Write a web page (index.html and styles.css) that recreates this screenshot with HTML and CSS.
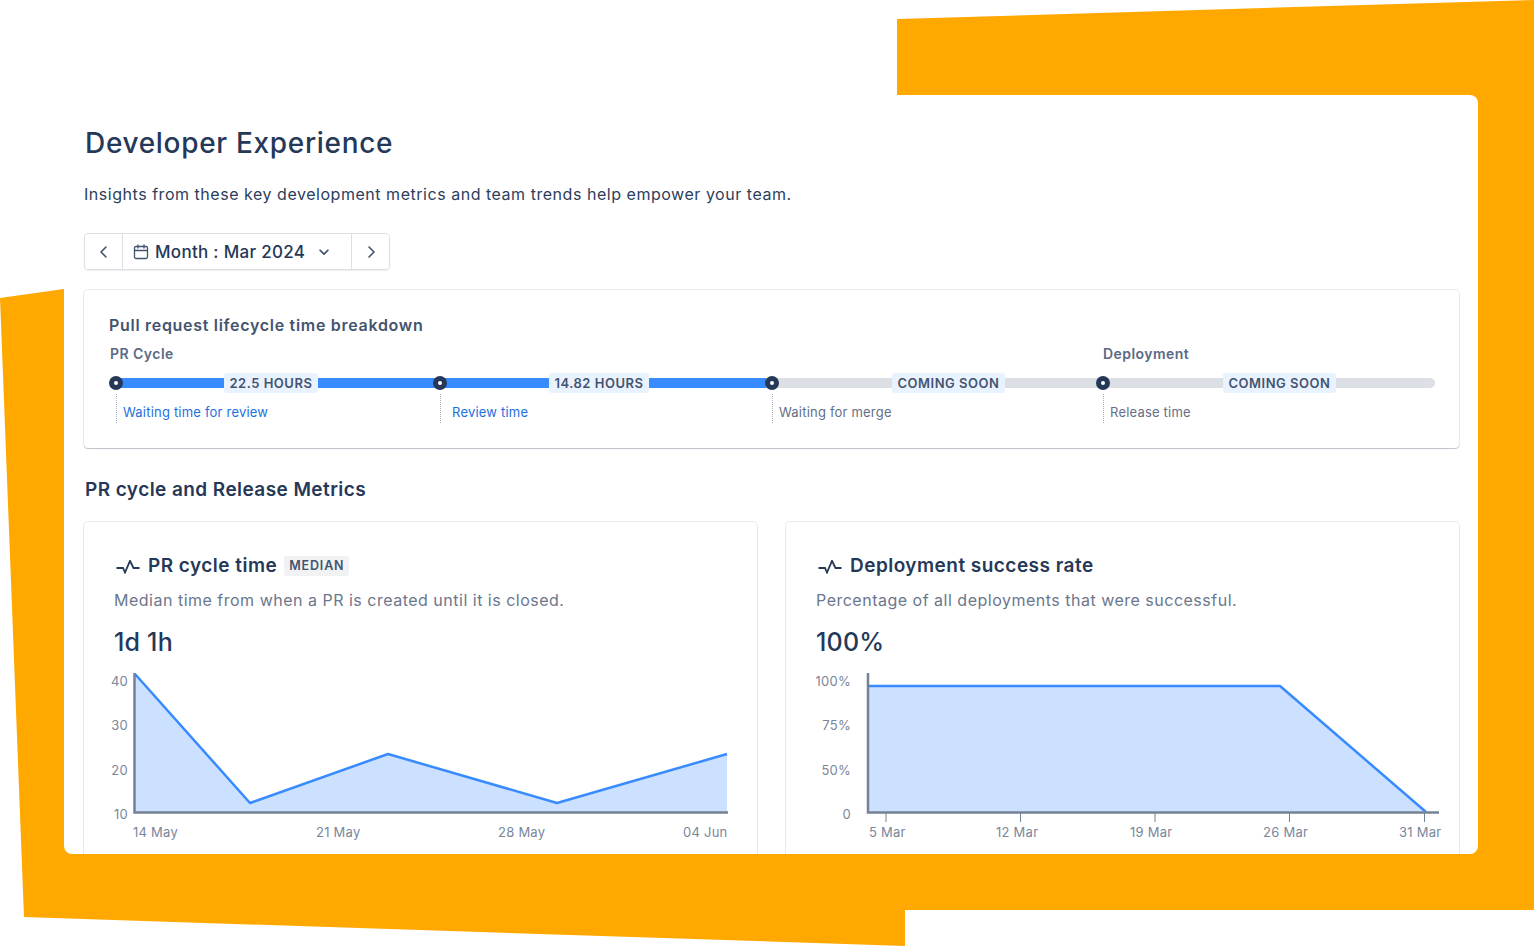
FILE: index.html
```html
<!DOCTYPE html>
<html lang="en">
<head>
<meta charset="utf-8">
<title>Developer Experience</title>
<link rel="stylesheet" href="styles.css">
</head>
<body>
<div class="stage">
  <svg class="backdrop" viewBox="0 0 1534 946" aria-hidden="true">
    <polygon points="897,19 1534,0 1534,910 905,910 905,946 24,917 0,298 64,289 64,300 897,300"/>
  </svg>
  <main class="panel">
    <h1 class="title">Developer Experience</h1>
    <p class="lead">Insights from these key development metrics and team trends help empower your team.</p>
    <div class="picker">
      <button class="pick-btn pick-side" aria-label="Previous">
        <svg class="ico" viewBox="0 0 16 16"><path d="M10 3 5 8l5 5"/></svg>
      </button>
      <button class="pick-btn pick-main">
        <svg class="ico cal" viewBox="0 0 16 16"><rect x="1.5" y="2.5" width="13" height="12" rx="1.5"/><path d="M1.5 6.5h13M5 1v3M11 1v3"/></svg>
        <span>Month : Mar 2024</span>
        <svg class="ico chev" viewBox="0 0 16 16"><path d="M3.5 6 8 10.5 12.5 6"/></svg>
      </button>
      <button class="pick-btn pick-side" aria-label="Next">
        <svg class="ico" viewBox="0 0 16 16"><path d="M6 3l5 5-5 5"/></svg>
      </button>
    </div>

    <section class="card breakdown">
      <h2 class="card-head">Pull request lifecycle time breakdown</h2>
      <div class="timeline">
        <div class="step step-a">
          <div class="stage-name">PR Cycle</div>
          <div class="track">
            <span class="line on lead-a"></span><span class="pill">22.5 HOURS</span><span class="line on grow"></span>
            <span class="dot"></span>
          </div>
          <div class="cap link">Waiting time for review</div>
        </div>
        <div class="step step-b">
          <div class="stage-name"></div>
          <div class="track">
            <span class="line on lead-b"></span><span class="pill">14.82 HOURS</span><span class="line on grow"></span>
            <span class="dot"></span>
          </div>
          <div class="cap link cap-wide">Review time</div>
        </div>
        <div class="step step-c">
          <div class="stage-name"></div>
          <div class="track">
            <span class="line lead-c"></span><span class="pill">COMING SOON</span><span class="line grow"></span>
            <span class="dot"></span>
          </div>
          <div class="cap">Waiting for merge</div>
        </div>
        <div class="step step-d">
          <div class="stage-name name-in">Deployment</div>
          <div class="track">
            <span class="line lead-c"></span><span class="pill">COMING SOON</span><span class="line grow end-r"></span>
            <span class="dot"></span>
          </div>
          <div class="cap">Release time</div>
        </div>
      </div>
    </section>

    <h2 class="section-title">PR cycle and Release Metrics</h2>

    <div class="metrics">
      <section class="card metric">
        <div class="metric-head">
          <svg class="pulse" viewBox="0 0 24 14"><path d="M.5 8H7l2 4.500L14 .8 17.500 8h6"/></svg>
          <h3>PR cycle time</h3>
          <span class="tag">MEDIAN</span>
        </div>
        <p class="metric-desc">Median time from when a PR is created until it is closed.</p>
        <div class="metric-value">1d 1h</div>
        <svg class="chart" viewBox="84 665 673 189">
          <polygon class="area" points="135,674 250,803 388,754 557,803 727,754 727,813 135,813"/>
          <polyline class="stroke" points="135,674 250,803 388,754 557,803 727,754"/>
          <path class="axis" d="M134.500 673V812.500H728"/>
          <g class="y-labels">
            <text x="128" y="686">40</text>
            <text x="128" y="730">30</text>
            <text x="128" y="775">20</text>
            <text x="128" y="819">10</text>
          </g>
          <g class="x-labels">
            <text x="133" y="837">14 May</text>
            <text x="316" y="837">21 May</text>
            <text x="498" y="837">28 May</text>
            <text x="683" y="837">04 Jun</text>
          </g>
        </svg>
      </section>
      <section class="card metric">
        <div class="metric-head">
          <svg class="pulse" viewBox="0 0 24 14"><path d="M.5 8H7l2 4.500L14 .8 17.500 8h6"/></svg>
          <h3>Deployment success rate</h3>
        </div>
        <p class="metric-desc">Percentage of all deployments that were successful.</p>
        <div class="metric-value">100%</div>
        <svg class="chart" viewBox="786 665 673 189">
          <polygon class="area" points="868,686 1280,686 1426,813 868,813"/>
          <polyline class="stroke" points="868,686 1280,686 1426,812"/>
          <path class="axis" d="M868 673V812.500H1439"/>
          <path class="tick" d="M886 813v9M1020.500 813v9M1155 813v9M1289.500 813v9M1424.500 813v9"/>
          <g class="y-labels">
            <text x="851" y="686">100%</text>
            <text x="851" y="730">75%</text>
            <text x="851" y="775">50%</text>
            <text x="851" y="819">0</text>
          </g>
          <g class="x-labels">
            <text x="869" y="837">5 Mar</text>
            <text x="996" y="837">12 Mar</text>
            <text x="1130" y="837">19 Mar</text>
            <text x="1263" y="837">26 Mar</text>
            <text x="1399" y="837">31 Mar</text>
          </g>
        </svg>
      </section>
    </div>
  </main>
</div>
</body>
</html>
```

FILE: styles.css
```css
* { box-sizing: border-box; }
html, body { margin: 0; padding: 0; background: #fff; }
body { font-family: Inter, "Liberation Sans", sans-serif; color: #172b4d; }

.stage { position: relative; width: 1534px; height: 946px; overflow: hidden; }
.backdrop { position: absolute; inset: 0; width: 1534px; height: 946px; }
.backdrop polygon { fill: #ffa800; }

.panel {
  position: absolute; left: 64px; top: 95px; width: 1414px; height: 759px;
  background: #fff; border-radius: 8px; overflow: hidden;
  padding: 30px 19px 0 20px;
}
.title { margin: 0 0 0 1px; font-size: 28px; line-height: 36px; font-weight: 500; letter-spacing: .68px; color: #253858; }
.lead { margin: 21px 0 0; font-size: 16px; line-height: 24px; color: #2c3e5d; letter-spacing: .53px; }

.picker { display: flex; width: 306px; height: 37px; margin-top: 27px; border: 1px solid #dcdfe4; border-radius: 4px; box-shadow: 0 1px 1px rgba(9,30,66,.08); }
.pick-btn { display: flex; align-items: center; background: #fff; border: 0; padding: 0; font: inherit; color: #172b4d; border-radius: 4px; }
.pick-side { width: 37px; justify-content: center; }
.pick-main { width: 230px; border-left: 1px solid #dcdfe4; border-right: 1px solid #dcdfe4; border-radius: 0; padding-left: 10px; font-size: 17px; font-weight: 500; letter-spacing: .3px; color: #253858; }
.ico { width: 16px; height: 16px; fill: none; stroke: #44546f; stroke-width: 1.6; stroke-linecap: round; stroke-linejoin: round; }
.cal { margin-right: 6px; stroke-width: 1.3; }
.chev { margin-left: 12px; stroke-width: 2; width: 14px; height: 14px; }

.card { background: #fff; border-radius: 4px; box-shadow: 0 1px 1px rgba(9,30,66,.2), 0 0 0 1px rgba(9,30,66,.08); }
.breakdown { height: 158px; margin-top: 20px; padding: 24px 24px 0 26px; }
.card-head { margin: 0 0 0 -1px; font-size: 16px; line-height: 22px; font-weight: 600; color: #44546f; letter-spacing: .7px; }

.timeline { display: flex; margin-top: 9px; }
.step { position: relative; }
.step-a { width: 324px; }
.step-b { width: 332px; }
.step-c { width: 331px; }
.step-d { width: 338px; }
.stage-name { height: 18px; font-size: 14px; line-height: 18px; font-weight: 600; color: #5a6a84; letter-spacing: .45px; }
.name-in { padding-left: 6px; }
.track { position: relative; display: flex; align-items: center; height: 20px; margin-top: 10px; }
.line { height: 10px; background: #dcdfe4; }
.line.on { background: #388bff; }
.grow { flex: 1; }
.lead-a { flex: 0 0 114px; border-radius: 5px 0 0 5px; }
.lead-b { flex: 0 0 115px; }
.lead-c { flex: 0 0 126px; }
.end-r { border-radius: 0 5px 5px 0; }
.pill { flex: none; height: 20px; padding: 0 5.500px; line-height: 20px; font-size: 13px; font-weight: 600; color: #44546f; background: #e9f2ff; border-radius: 3px; letter-spacing: .5px; white-space: nowrap; }
.dot { position: absolute; left: -1px; top: 3px; width: 14px; height: 14px; border-radius: 50%; border: 5px solid #253858; background: #fff; }
.cap { margin: 1px 0 0 6px; height: 29px; padding: 9px 0 0 6px; border-left: 1.500px dotted #a5adba; font-size: 13px; line-height: 18px; color: #626f86; letter-spacing: .2px; }
.cap.link { color: #1d6fe0; }
.cap-wide { padding-left: 11px; }

.section-title { margin: 29px 0 0 1px; font-size: 19px; line-height: 26px; font-weight: 600; color: #253858; letter-spacing: .43px; }

.metrics { display: grid; grid-template-columns: 673px 673px; column-gap: 29px; margin-top: 19px; }
.metric { height: 400px; padding: 29px 30px 0; }
.metric-head { display: flex; align-items: center; height: 30px; }
.metric-head h3 { margin: 0; font-size: 19px; line-height: 30px; font-weight: 600; color: #253858; letter-spacing: .47px; }
.pulse { width: 24px; height: 14px; margin: 2px 8px 0 0; fill: none; stroke: #253858; stroke-width: 1.8; }
.metric-head .pulse { margin-left: 2px; }
.tag { margin-left: 7px; height: 20px; padding: 0 5px; line-height: 20px; background: #f1f2f4; border-radius: 3px; font-size: 12.500px; font-weight: 600; color: #44546f; letter-spacing: .85px; }
.metric-desc { margin: 7px 0 0; font-size: 16px; line-height: 24px; color: #6b778c; letter-spacing: .5px; }
.metric-value { margin-top: 13px; font-size: 25px; line-height: 34px; font-weight: 500; color: #253858; letter-spacing: .2px; }
.chart { display: block; width: 673px; height: 189px; margin: 6px -30px 0; }
.area { fill: #cce0ff; }
.stroke { fill: none; stroke: #388bff; stroke-width: 2.500; stroke-linejoin: round; }
.axis { fill: none; stroke: #758195; stroke-width: 2.500; }
.tick { fill: none; stroke: #758195; stroke-width: 1; }
.chart text { font-family: Inter, "Liberation Sans", sans-serif; font-size: 13px; fill: #7a869a; letter-spacing: .25px; }
.y-labels text { text-anchor: end; }
```
